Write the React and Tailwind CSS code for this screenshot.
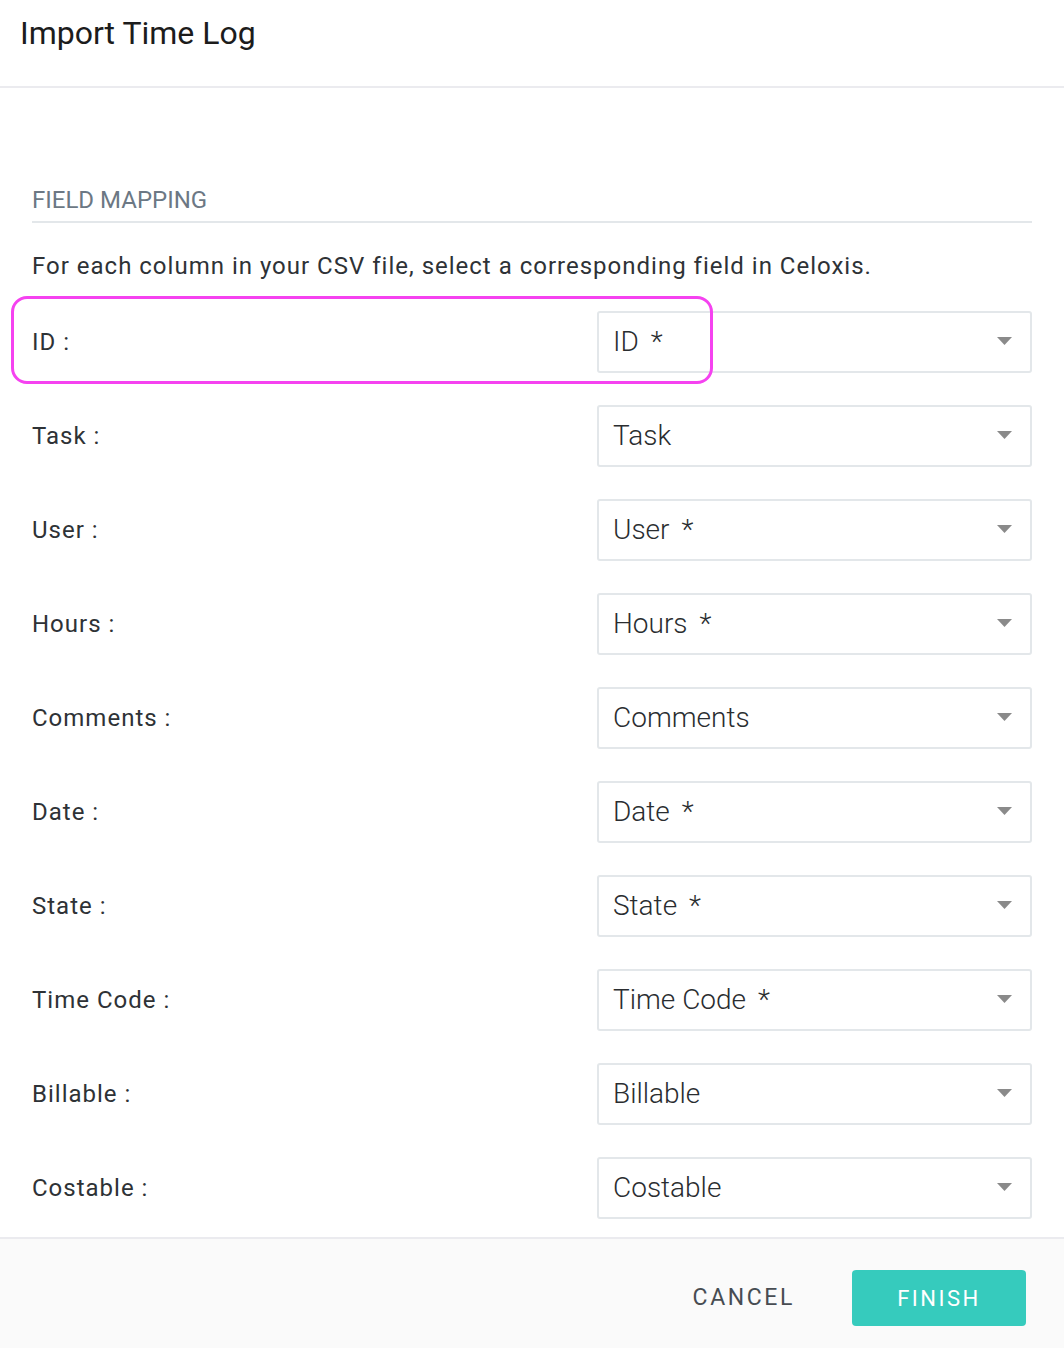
const FIELDS = [
  { label: 'ID', value: 'ID', required: true },
  { label: 'Task', value: 'Task' },
  { label: 'User', value: 'User', required: true },
  { label: 'Hours', value: 'Hours', required: true },
  { label: 'Comments', value: 'Comments' },
  { label: 'Date', value: 'Date', required: true },
  { label: 'State', value: 'State', required: true },
  { label: 'Time Code', value: 'Time Code', required: true },
  { label: 'Billable', value: 'Billable' },
  { label: 'Costable', value: 'Costable' },
]

// One mapping row: CSV column name on the left, field picker on the right.
function MappingRow({ field, highlight }) {
  return (
    <div className="relative flex h-[62px] items-center">
      <div className="flex-1 text-[24px] leading-[28px] tracking-[1px] text-[#2e3236]">{field.label} :</div>
      <div className="flex h-[62px] w-[435px] items-center justify-between rounded-[3px] border-2 border-[#e3e7ea] bg-white pl-[14px] pr-[18px]">
        <span className="text-[28px] font-light leading-[32px] text-[#2a2d30]">
          {field.value}
          {field.required && <span className="ml-[12px]">*</span>}
        </span>
        <svg width="15" height="8" viewBox="0 0 15 8" className="mb-[2px]">
          <path d="M0 0 H15 L7.5 8 Z" fill="#8a8a8a" />
        </svg>
      </div>
      {highlight && (
        <div className="pointer-events-none absolute left-[-21px] top-[-15px] h-[88px] w-[702px] rounded-[16px] border-[3px] border-[#f542f0]" />
      )}
    </div>
  )
}

export default function App() {
  return (
    <div className="flex h-[1348px] w-[1064px] flex-col bg-white font-['Roboto',sans-serif]">
      <div className="flex h-[88px] shrink-0 items-start border-b-2 border-[#ebebef] px-[20px] pt-[9px]">
        <h1 className="text-[32px] text-[#1c1c1c]">Import Time Log</h1>
      </div>

      <div className="flex-1 px-[32px] pt-[98px]">
        <div className="border-b-2 border-[#e3e7ea] pb-[7px] text-[24px] leading-[28px] uppercase text-[#6c7884]">Field Mapping</div>
        <p className="mt-[29px] text-[24px] leading-[28px] tracking-[1px] text-[#2e3236]">
          For each column in your CSV file, select a corresponding field in Celoxis.
        </p>
        <div className="mt-[31px] flex flex-col gap-[32px]">
          {FIELDS.map((f, i) => (
            <MappingRow key={f.label} field={f} highlight={i === 0} />
          ))}
        </div>
      </div>

      <div className="flex h-[111px] shrink-0 items-start justify-end gap-[57px] border-t-2 border-[#ebebef] bg-[#fafafa] pr-[38px] pt-[31px]">
        <button type="button" className="h-[56px] text-[23px] tracking-[2.6px] text-[#474c52]">CANCEL</button>
        <button type="button" className="flex h-[56px] w-[174px] items-center justify-center rounded-[4px] bg-[#36cbbd] text-[22px] tracking-[2.5px] text-white">
          FINISH
        </button>
      </div>
    </div>
  )
}
